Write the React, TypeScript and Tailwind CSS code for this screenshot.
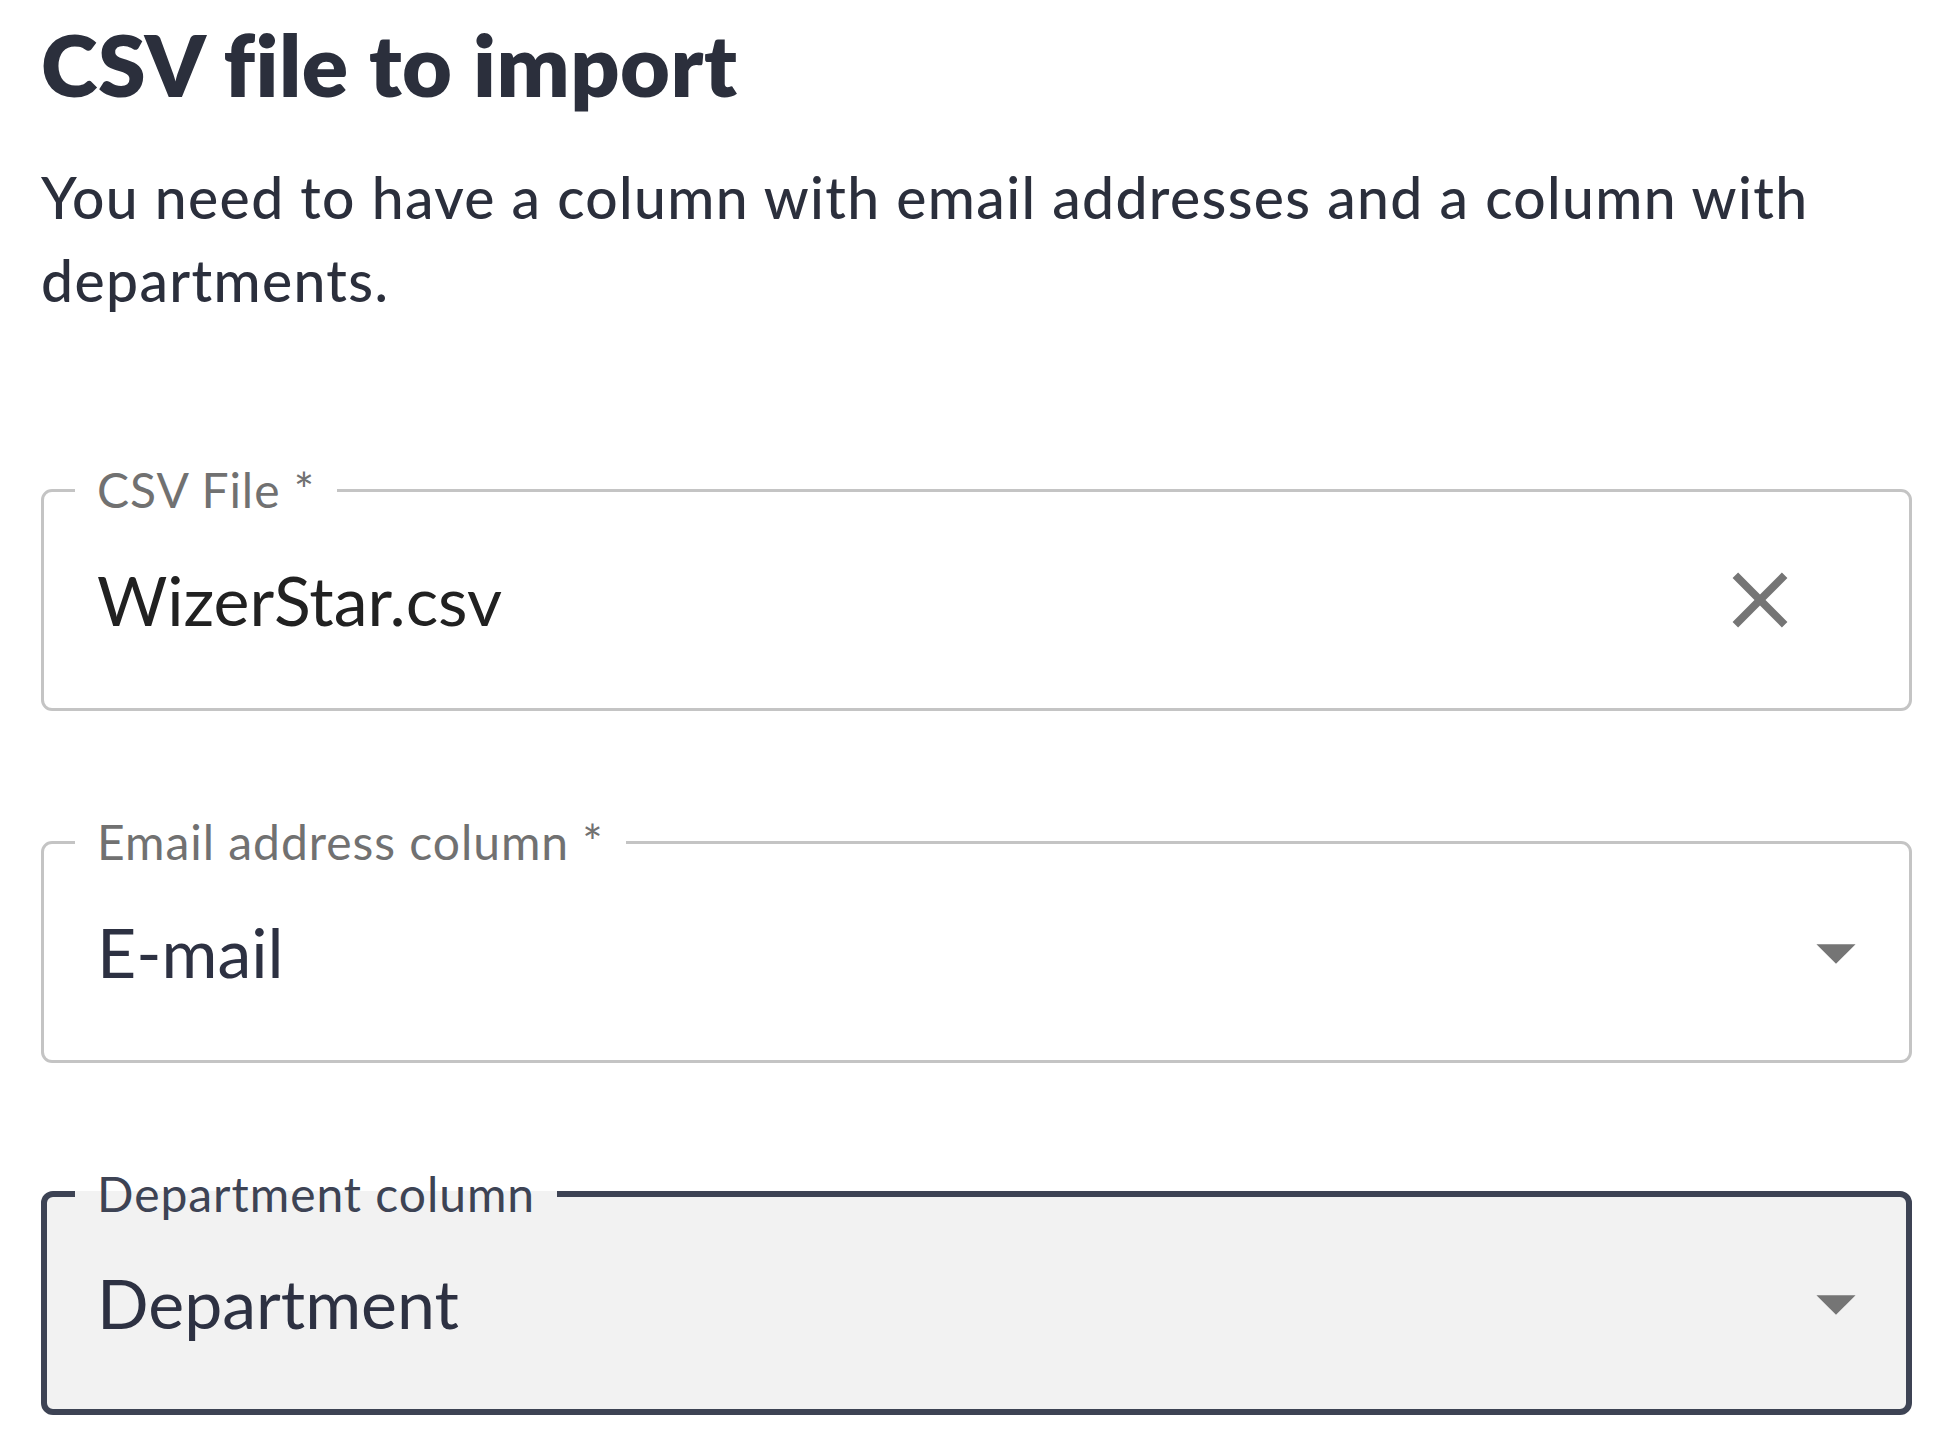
import React from "react";

function CloseIcon() {
  return (
    <svg viewBox="0 0 24 24" className="w-[94px] h-[94px] shrink-0" fill="#757575" aria-hidden="true">
      <path d="M19 6.41 17.59 5 12 10.59 6.41 5 5 6.41 10.59 12 5 17.59 6.41 19 12 13.41 17.59 19 19 17.59 13.41 12z" />
    </svg>
  );
}

function ArrowIcon() {
  return (
    <svg viewBox="0 0 24 24" className="w-[94px] h-[94px] shrink-0" fill="#757575" aria-hidden="true">
      <path d="M7 10l5 5 5-5z" />
    </svg>
  );
}

export default function App() {
  return (
    <div className="[font-family:Lato,'Noto_Sans',sans-serif] bg-white min-h-[1452px] pl-[41px] pr-[40px] pt-[12px]">
      <h1 className="text-[86px] leading-[103px] font-extrabold tracking-[0.006em] text-[#2b2f3c]">CSV file to import</h1>
      <p className="mt-[41px] text-[57px] leading-[83px] font-medium tracking-[0.024em] text-[#2b2f3c]">
        You need to have a column with email addresses and a column with departments.
      </p>

      <div className="mt-[144px] flex flex-col gap-[107px]">
        {/* CSV File */}
        <fieldset className="m-0 p-0 min-w-0 border-[3px] border-[#c4c4c4] rounded-[11px] bg-white">
          <legend className="ml-[31px] px-[22px] text-[48px] leading-[48px] tracking-[0.02em] text-[#717171]">CSV File *</legend>
          <div className="h-[194px] pb-[22px] pl-[53px] pr-[102px] flex items-center justify-between">
            <span className="text-[68px] leading-[82px] text-[#212121]">WizerStar.csv</span>
            <CloseIcon />
          </div>
        </fieldset>

        {/* Email address column */}
        <fieldset className="m-0 p-0 min-w-0 border-[3px] border-[#c4c4c4] rounded-[11px] bg-white">
          <legend className="ml-[31px] px-[22px] text-[48px] leading-[48px] tracking-[0.02em] text-[#717171]">Email address column *</legend>
          <div className="h-[194px] pb-[22px] pl-[53px] pr-[26px] flex items-center justify-between">
            <span className="text-[68px] leading-[82px] text-[#2d3142]">E-mail</span>
            <ArrowIcon />
          </div>
        </fieldset>

        {/* Department column (focused) */}
        <fieldset className="m-0 p-0 min-w-0 border-[6px] border-[#3d4354] rounded-[12px] bg-[#f2f2f2]">
          <legend className="ml-[28px] px-[22px] text-[48px] leading-[48px] tracking-[0.02em] text-[#3d4354]">Department column</legend>
          <div className="h-[191px] pb-[21px] pl-[50px] pr-[23px] flex items-center justify-between">
            <span className="text-[68px] leading-[82px] text-[#2d3142]">Department</span>
            <ArrowIcon />
          </div>
        </fieldset>
      </div>
    </div>
  );
}
